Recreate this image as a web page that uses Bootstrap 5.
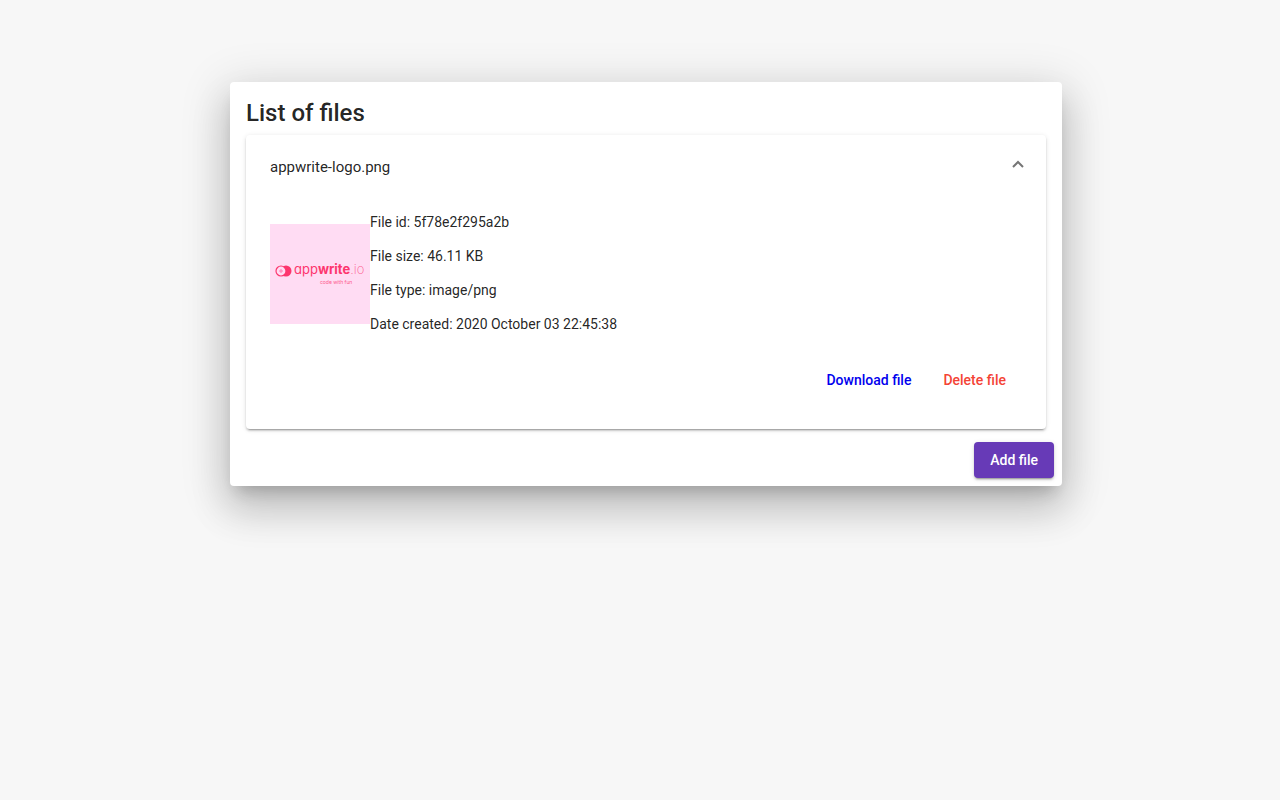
<!DOCTYPE html>
<html lang="en">
<head>
<meta charset="utf-8">
<meta name="viewport" content="width=device-width, initial-scale=1">
<title>Files</title>
<link href="https://cdn.jsdelivr.net/npm/bootstrap@5.3.0/dist/css/bootstrap.min.css" rel="stylesheet">
<style>
body { background: #f7f7f7; color: rgba(0,0,0,.87); font-family: Roboto, "Helvetica Neue", sans-serif; font-size: 14px; line-height: 20px; padding: 82px 0 24px; }
.files-card { width: 65%; margin-left: calc(17.5% + 6px); border-radius: 4px;
  box-shadow: 0 11px 15px -7px rgba(0,0,0,.2), 0 24px 38px 3px rgba(0,0,0,.14), 0 9px 46px 8px rgba(0,0,0,.12); }
.files-title { font-size: 24px; font-weight: 500; line-height: 30px; margin-bottom: 7px; }
.file-panel { border-radius: 4px;
  box-shadow: 0 3px 1px -2px rgba(0,0,0,.2), 0 2px 2px 0 rgba(0,0,0,.14), 0 1px 5px 0 rgba(0,0,0,.12); }
.panel-toggle { height: 64px; font-size: 15px; color: inherit; }
.panel-toggle svg { transform: rotate(180deg); margin-bottom: 4px; }
.panel-toggle.collapsed svg { transform: none; }
.file-thumb { width: 100px; height: 100px; background: #ffdcf3; }
.file-info { margin: 13px 0 15px; }
.file-info li + li { margin-top: 14px; }
.file-actions { padding: 13px 0 31px; }
.card-actions { padding: 13px 8px 8px; }
.mat-btn { font-size: 14px; font-weight: 500; line-height: 36px; padding: 0 16px; border: 0; border-radius: 4px; }
.btn-download, .btn-download:hover { color: #00e; }
.btn-delete, .btn-delete:hover { color: #f44336; }
.btn-add, .btn-add:hover { color: #fff; background: #673ab7;
  box-shadow: 0 3px 1px -2px rgba(0,0,0,.2), 0 2px 2px 0 rgba(0,0,0,.14), 0 1px 5px 0 rgba(0,0,0,.12); }
.logo-name { font: 400 13px Inter, sans-serif; font-feature-settings: "cv11"; fill: #fd366e; }
.logo-strong { font-weight: 700; }
.logo-thin { font-weight: 200; fill: #fd5a8c; }
.logo-tag { font: 400 5px Inter, sans-serif; font-feature-settings: "cv11"; fill: #fd5a8c; }
</style>
</head>
<body class="min-vh-100">
<main class="files-card bg-white">
  <div class="px-3 pt-3">
    <h2 class="files-title">List of files</h2>
    <section class="file-panel bg-white">
      <button class="panel-toggle btn border-0 w-100 px-4 d-flex align-items-center justify-content-between" type="button" data-bs-toggle="collapse" data-bs-target="#file-details" aria-expanded="true" aria-controls="file-details">
        <span>appwrite-logo.png</span>
        <svg width="8" height="8" viewBox="0 0 8 8" overflow="visible" fill="none" stroke="#757575" stroke-width="2" aria-hidden="true"><path d="M-1 2 4 7 9 2"/></svg>
      </button>
      <div class="collapse show" id="file-details">
        <div class="px-4">
          <div class="d-flex align-items-center">
            <svg class="file-thumb flex-shrink-0" viewBox="0 0 100 100" role="img" aria-label="appwrite.io logo">
              <circle cx="16" cy="47" r="5.500" fill="#fd366e"/>
              <circle cx="11" cy="47" r="5" fill="#ffdcf3" stroke="#fd366e" stroke-width="1.200"/>
              <path d="M11 45v4M9 47h4" stroke="#ff7fae" stroke-width="1"/>
              <text class="logo-name" x="24" y="50">app<tspan class="logo-strong">write</tspan><tspan class="logo-thin">.io</tspan></text>
              <text class="logo-tag" x="50" y="60">code with fun</text>
            </svg>
            <ul class="file-info list-unstyled">
              <li>File id: 5f78e2f295a2b</li>
              <li>File size: 46.11 KB</li>
              <li>File type: image/png</li>
              <li>Date created: 2020 October 03 22:45:38</li>
            </ul>
          </div>
          <div class="file-actions d-flex justify-content-end">
            <a class="btn mat-btn btn-download" href="#download">Download file</a>
            <button class="btn mat-btn btn-delete" type="button">Delete file</button>
          </div>
        </div>
      </div>
    </section>
  </div>
  <div class="card-actions d-flex justify-content-end">
    <button class="btn mat-btn btn-add" type="button">Add file</button>
  </div>
</main>
<script src="https://cdn.jsdelivr.net/npm/bootstrap@5.3.0/dist/js/bootstrap.bundle.min.js"></script>
</body>
</html>
